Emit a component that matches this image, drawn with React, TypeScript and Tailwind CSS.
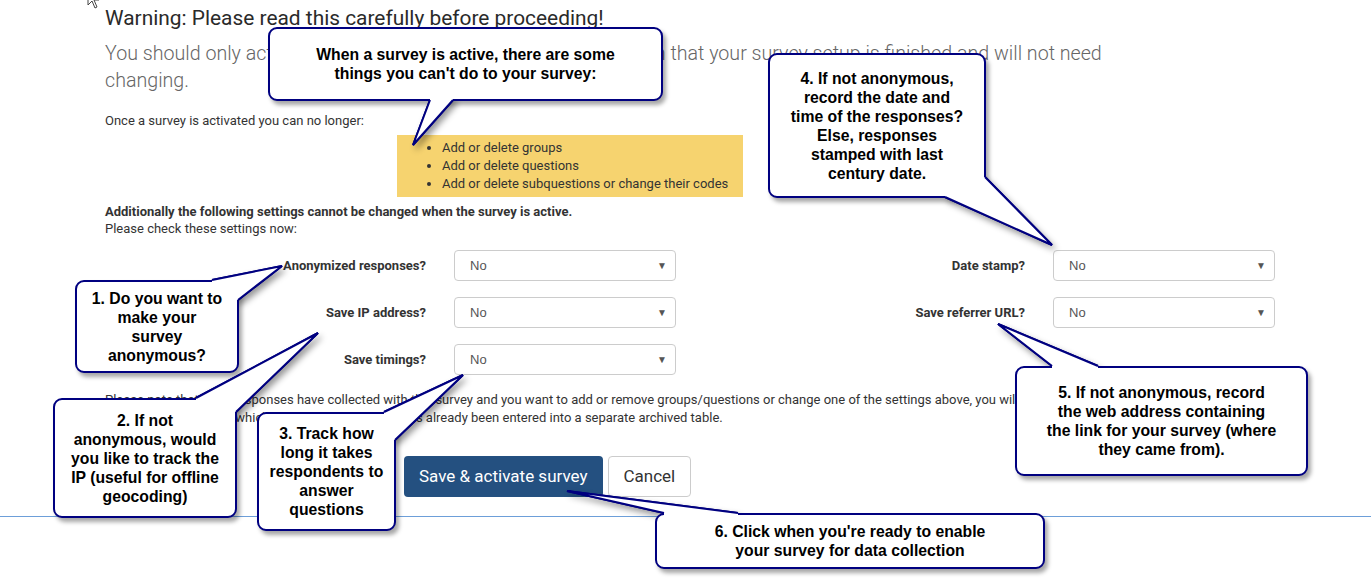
const items = [
  "Add or delete groups",
  "Add or delete questions",
  "Add or delete subquestions or change their codes",
];

const leftSettings = ["Anonymized responses?", "Save IP address?", "Save timings?"];
const rightSettings = ["Date stamp?", "Save referrer URL?"];

// callout boxes, positions are the annotation's place on the screenshot
const callouts = [
  {
    box: "left-[268px] top-[27px] w-[395px] h-[74px]",
    lines: ["When a survey is active, there are some", "things you can't do to your survey:"],
  },
  {
    box: "left-[768px] top-[53px] w-[218px] h-[145px]",
    lines: [
      "4. If not anonymous,",
      "record the date and",
      "time of the responses?",
      "Else, responses",
      "stamped with last",
      "century date.",
    ],
  },
  {
    box: "left-[75px] top-[280px] w-[164px] h-[93px]",
    lines: ["1. Do you want to", "make your", "survey", "anonymous?"],
  },
  {
    box: "left-[53px] top-[398px] w-[184px] h-[120px]",
    lines: ["2. If not", "anonymous, would", "you like to track the", "IP (useful for offline", "geocoding)"],
  },
  {
    box: "left-[257px] top-[412px] w-[139px] h-[119px]",
    lines: ["3. Track how", "long it takes", "respondents to", "answer", "questions"],
  },
  {
    box: "left-[1015px] top-[366px] w-[293px] h-[110px]",
    lines: [
      "5. If not anonymous, record",
      "the web address containing",
      "the link for your survey (where",
      "they came from).",
    ],
  },
  {
    box: "left-[655px] top-[513px] w-[390px] h-[56px]",
    lines: ["6. Click when you're ready to enable", "your survey for data collection"],
  },
];

// tail: fill covers the box border at the base, stroke draws the two sides
const tails = [
  { fill: "430,96 430,100 413,145 453,100 453,96", line: "430,100 413,145 453,100" },
  { fill: "945,193 945,197 1052,245 985,177 981,177 981,193", line: "945,197 1052,245 985,177" },
  { fill: "212,284 212,280 282,266 238,300 234,300 234,284", line: "212,280 282,266 238,300" },
  { fill: "196,402 196,398 318,333 236,412 232,412 232,402", line: "196,398 318,333 236,412" },
  { fill: "384,416 384,412 463,375 395,440 391,440 391,416", line: "384,412 463,375 395,440" },
  { fill: "1052,370 1052,366 998,324 1098,366 1098,370", line: "1052,366 998,324 1098,366" },
  { fill: "664,517 664,513 567,491 738,513 738,517", line: "664,513 567,491 738,513" },
];

function Tails({ shadow }: { shadow?: boolean }) {
  return (
    <svg
      width={1371}
      height={579}
      className={
        shadow
          ? "absolute left-0 top-0 pointer-events-none drop-shadow-[3px_4px_3px_rgba(0,0,0,0.4)]"
          : "absolute left-0 top-0 pointer-events-none"
      }
    >
      {tails.map((t, i) => (
        <g key={i}>
          <polygon points={t.fill} fill="#fff" />
          <polyline points={t.line} fill="none" stroke="#000080" strokeWidth={2} strokeLinejoin="miter" />
        </g>
      ))}
    </svg>
  );
}

function FakeSelect() {
  return (
    <div className="w-[222px] h-[31px] flex items-center justify-between pl-[15px] pr-[8px] border border-[#ccc] rounded-[4px] bg-white text-[13px] text-[#555] font-['Liberation_Sans',sans-serif]">
      <span>No</span>
      <span className="text-[10px] text-[#555]">▼</span>
    </div>
  );
}

function SettingRow({ label }: { label: string }) {
  return (
    <div className="flex items-center gap-[28px]">
      <div className="w-[321px] text-right text-[13px] font-bold text-[#333]">{label}</div>
      <FakeSelect />
    </div>
  );
}

export default function App() {
  return (
    <div className="relative w-[1371px] h-[579px] overflow-hidden bg-white font-['Roboto',sans-serif]">
      {/* mouse pointer peeking at the top */}
      <svg width="14" height="20" viewBox="0 0 14 20" className="absolute left-[87px] top-[-11px]">
        <path d="M1 1 L1 16 L5 12 L8 19 L10 18 L7 11 L12 11 Z" fill="#fff" stroke="#444" strokeWidth="1" />
      </svg>

      <div className="pl-[105px] pt-[6px]">
        <h3 className="text-[20.9px] leading-[24px] text-[#2a2a2a]">
          Warning: Please read this carefully before proceeding!
        </h3>
        <p className="mt-[10px] text-[19.65px] leading-[27px] font-light text-[#666]">
          You should only activate a survey when you are absolutely certain that your survey setup is finished and will not need
          <br />
          changing.
        </p>
        <p className="mt-[18px] text-[13px] leading-[18px] text-[#333]">Once a survey is activated you can no longer:</p>

        <div className="mt-[5px] ml-[292px] w-[346px] bg-[#f6d36f] py-[4px]">
          <ul className="list-disc pl-[45px] text-[13px] leading-[18px] text-[#333]">
            {items.map((it) => (
              <li key={it}>{it}</li>
            ))}
          </ul>
        </div>

        <p className="mt-[6px] text-[13px] leading-[17px] font-bold text-[#333]">
          Additionally the following settings cannot be changed when the survey is active.
        </p>
        <p className="text-[13px] leading-[17px] text-[#333]">Please check these settings now:</p>

        <div className="mt-[13px] flex">
          <div className="w-[599px] flex flex-col gap-[16px]">
            {leftSettings.map((s) => (
              <SettingRow key={s} label={s} />
            ))}
          </div>
          <div className="w-[599px] flex flex-col gap-[16px]">
            {rightSettings.map((s) => (
              <SettingRow key={s} label={s} />
            ))}
          </div>
        </div>

        <p className="mt-[16px] text-[13px] leading-[18px] text-[#333]">
          Please note that once responses have collected with this survey and you want to add or remove groups/questions or change one of the settings above, you will need to
          <br />
          deactivate this survey, which will move all data that has already been entered into a separate archived table.
        </p>

        <div className="mt-[29px] ml-[299px] flex gap-[5px]">
          <button className="h-[41px] px-[15px] rounded-[4px] bg-[#245080] text-white text-[17px]">
            Save &amp; activate survey
          </button>
          <button className="h-[41px] px-[15px] rounded-[4px] border border-[#ccc] bg-white text-[#333] text-[17px]">
            Cancel
          </button>
        </div>
      </div>

      <div className="mt-[19px] border-t border-[#6d9fd9]" />

      {/* annotation layer */}
      <Tails shadow />
      {callouts.map((c, i) => (
        <div
          key={i}
          className={`absolute ${c.box} flex flex-col items-center justify-center text-center bg-white border-2 border-[#000080] rounded-[9px] shadow-[3px_4px_4px_rgba(0,0,0,0.35)] font-['Liberation_Sans',Arial,sans-serif] font-bold text-[15.75px] leading-[19px] text-black`}
        >
          {c.lines.map((l) => (
            <div key={l} className="whitespace-nowrap">{l}</div>
          ))}
        </div>
      ))}
      <Tails />
    </div>
  );
}
